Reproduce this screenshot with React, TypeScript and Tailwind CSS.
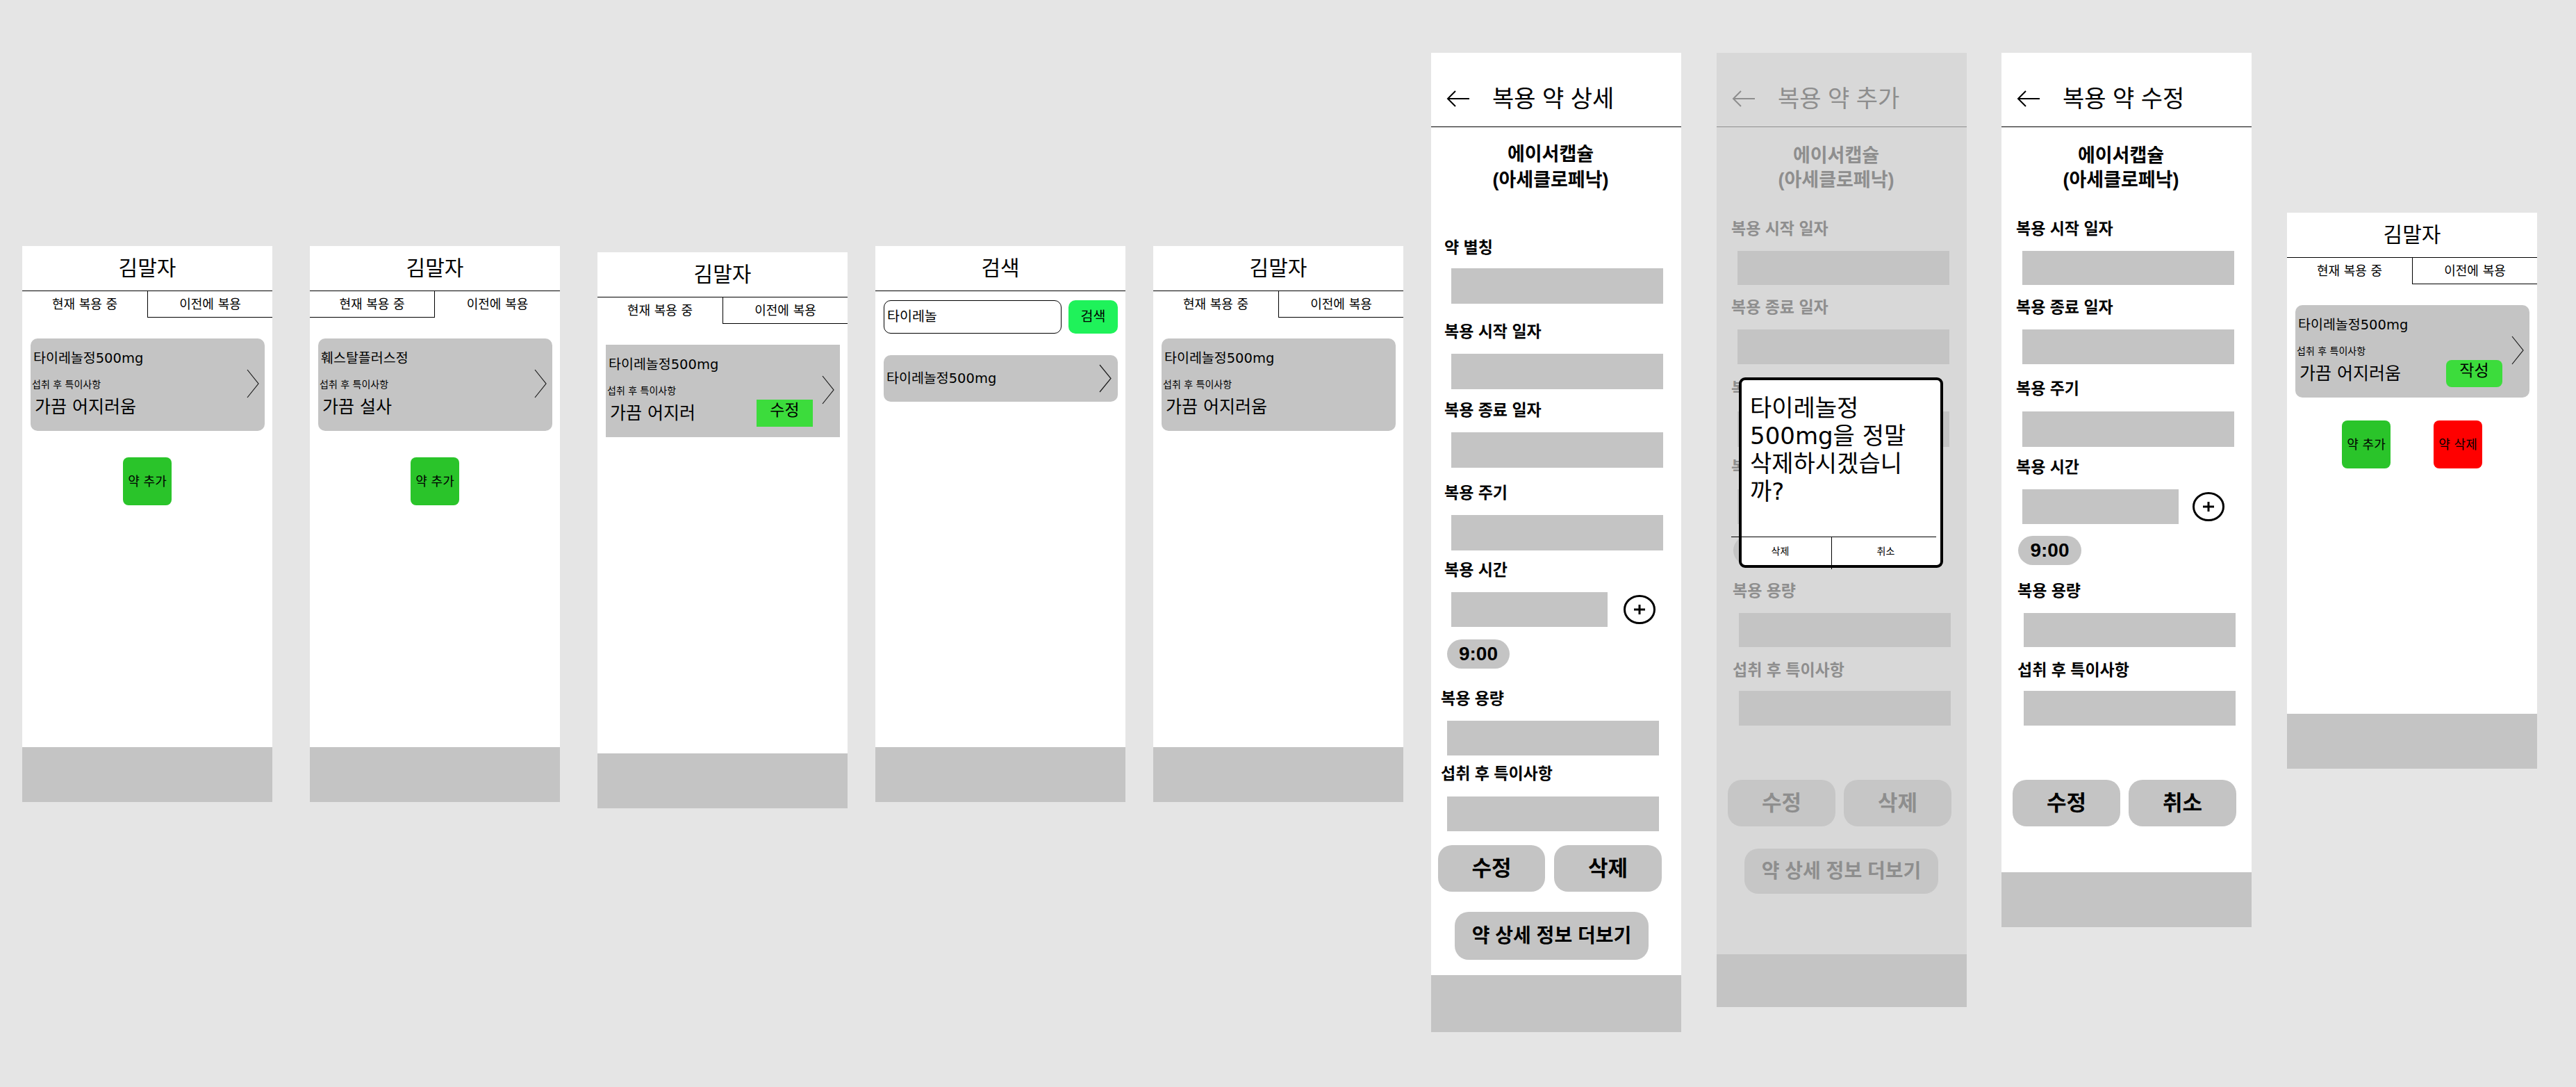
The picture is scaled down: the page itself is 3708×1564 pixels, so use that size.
import React from "react";

const SANS = "font-['DejaVu_Sans','Noto_Sans_CJK_KR',sans-serif]";
const FORM = "font-['Liberation_Sans','Noto_Sans_CJK_KR',sans-serif]";

function Chevron({ h = 42 }: { h?: number }) {
  return (
    <svg width="18" height={h} viewBox={`0 0 18 ${h}`} className="block">
      <polyline points={`1,1 17,${h / 2} 1,${h - 1}`} fill="none" stroke="#1a1a1a" strokeWidth="1.2" />
    </svg>
  );
}

function Arrow() {
  return (
    <svg width="34" height="26" viewBox="0 0 34 26" className="block shrink-0">
      <path d="M33 13H2M13 2 2 13l11 11" fill="none" stroke="currentColor" strokeWidth="2" />
    </svg>
  );
}

function PlusCircle({ color = "#000" }: { color?: string }) {
  return (
    <svg width="46" height="42" viewBox="0 0 46 42" className="block shrink-0">
      <ellipse cx="23" cy="21" rx="21.5" ry="19.5" fill="none" stroke={color} strokeWidth="3" />
      <path d="M15 21h16M23 14v14" stroke={color} strokeWidth="3" />
    </svg>
  );
}

function Screen({ className = "", children }: { className?: string; children: React.ReactNode }) {
  return (
    <div className={`w-[360px] h-[800px] shrink-0 bg-white flex flex-col ${SANS} ${className}`}>
      <div className="flex-1 flex flex-col">{children}</div>
      <div className="h-[79px] bg-[#c4c4c4]" />
    </div>
  );
}

function TitleBar({ title }: { title: string }) {
  return (
    <div className="h-[65px] shrink-0 border-b border-black flex items-center justify-center text-[30px] leading-none">
      {title}
    </div>
  );
}

function Tabs({ selected }: { selected: 0 | 1 }) {
  return (
    <div className="grid grid-cols-2 h-[38px] text-[18px] leading-none">
      <div
        className={
          selected === 0
            ? "flex items-center justify-center"
            : "flex items-center justify-center border-r border-b border-black"
        }
      >
        현재 복용 중
      </div>
      <div
        className={
          selected === 1
            ? "flex items-center justify-center"
            : "flex items-center justify-center border-l border-b border-black"
        }
      >
        이전에 복용
      </div>
    </div>
  );
}

function MedCard({
  name,
  value,
  rounded = true,
  chevron = true,
  action,
}: {
  name: string;
  value: string;
  rounded?: boolean;
  chevron?: boolean;
  action?: { label: string; cls: string };
}) {
  return (
    <div className={`ml-[12px] mt-[30px] w-[337px] h-[133px] bg-[#c4c4c4] flex ${rounded ? "rounded-[10px]" : ""}`}>
      <div className="flex-1 min-w-0 flex flex-col pt-[15px]">
        <div className="text-[19.5px] leading-[28px] pl-[4px] whitespace-nowrap">{name}</div>
        <div className="mt-[14px] text-[14px] leading-[18px] pl-[2px] whitespace-nowrap">섭취 후 특이사항</div>
        <div className="mt-[9px] text-[25px] leading-[30px] pl-[6px] whitespace-nowrap">{value}</div>
      </div>
      {action && (
        <div
          className={`mt-[79px] w-[81px] h-[39px] shrink-0 flex justify-center pt-[1px] text-[23px] leading-[28px] ${action.cls}`}
        >
          {action.label}
        </div>
      )}
      {chevron && (
        <div className="mt-[44px] ml-[13px] mr-[8px] shrink-0">
          <Chevron />
        </div>
      )}
    </div>
  );
}

function AddBtn() {
  return (
    <div className="w-[70px] h-[69px] rounded-[8px] bg-[#2ac42a] flex items-center justify-center text-[18px] whitespace-nowrap">
      약 추가
    </div>
  );
}

function FormHeader({ title, dim }: { title: string; dim?: boolean }) {
  return (
    <div
      className={`h-[107px] shrink-0 border-b flex items-end pb-[20px] pl-[22px] ${dim ? "border-[#8f8f8f]" : "border-black"}`}
    >
      <div className="h-[40px] flex items-center gap-[32px]">
        <Arrow />
        <span className="text-[34px] leading-[40px] whitespace-nowrap">{title}</span>
      </div>
    </div>
  );
}

const LABEL = "text-[23px] leading-[30px] font-bold whitespace-nowrap";
const BIGBTN = "h-[67px] rounded-[20px] flex items-center justify-center text-[31px] font-bold leading-none";

function DetailScreen() {
  return (
    <div className={`w-[360px] h-[1409px] shrink-0 bg-white flex flex-col ml-[40px] mt-[76px] ${FORM}`}>
      <FormHeader title="복용 약 상세" />
      <div className="mt-[21px] pr-[16px] text-center text-[27px] leading-[37px] font-bold">
        에이서캡슐
        <br />
        (아세클로페낙)
      </div>
      <div className={`mt-[63px] pl-[19px] ${LABEL}`}>약 별칭</div>
      <div className="mt-[15px] ml-[29px] w-[305px] h-[51px] bg-[#c4c4c4]" />
      <div className={`mt-[25px] pl-[19px] ${LABEL}`}>복용 시작 일자</div>
      <div className="mt-[17px] ml-[29px] w-[305px] h-[51px] bg-[#c4c4c4]" />
      <div className={`mt-[15px] pl-[19px] ${LABEL}`}>복용 종료 일자</div>
      <div className="mt-[17px] ml-[29px] w-[305px] h-[51px] bg-[#c4c4c4]" />
      <div className={`mt-[21px] pl-[19px] ${LABEL}`}>복용 주기</div>
      <div className="mt-[17px] ml-[29px] w-[305px] h-[51px] bg-[#c4c4c4]" />
      <div className={`mt-[13px] pl-[19px] ${LABEL}`}>복용 시간</div>
      <div className="mt-[17px] flex items-center">
        <div className="ml-[29px] w-[225px] h-[50px] bg-[#c4c4c4]" />
        <div className="ml-[23px]">
          <PlusCircle />
        </div>
      </div>
      <div className="mt-[18px] ml-[23px] w-[90px] h-[42px] rounded-full bg-[#c4c4c4] flex items-center justify-center text-[28px] font-bold leading-none">
        9:00
      </div>
      <div className={`mt-[28px] pl-[14px] ${LABEL}`}>복용 용량</div>
      <div className="mt-[17px] ml-[23px] w-[305px] h-[50px] bg-[#c4c4c4]" />
      <div className={`mt-[11px] pl-[14px] ${LABEL}`}>섭취 후 특이사항</div>
      <div className="mt-[18px] ml-[23px] w-[305px] h-[50px] bg-[#c4c4c4]" />
      <div className="mt-[20px] pl-[10px] flex gap-[13px]">
        <div className={`w-[154px] bg-[#c4c4c4] ${BIGBTN}`}>수정</div>
        <div className={`w-[155px] bg-[#c4c4c4] ${BIGBTN}`}>삭제</div>
      </div>
      <div className="mt-[29px] ml-[34px] w-[279px] h-[69px] rounded-[20px] bg-[#c4c4c4] flex items-center justify-center text-[28px] font-bold leading-none whitespace-nowrap">
        약 상세 정보 더보기
      </div>
      <div className="flex-1" />
      <div className="h-[82px] bg-[#c4c4c4]" />
    </div>
  );
}

function EditScreen({
  title,
  dim,
  second,
  more,
  dialog,
  className,
  footer,
}: {
  title: string;
  dim?: boolean;
  second: string;
  more?: boolean;
  dialog?: boolean;
  className: string;
  footer: string;
}) {
  const bar = "bg-[#c4c4c4]";
  const btn = dim ? "bg-[#c6c6c6]" : "bg-[#c4c4c4]";
  return (
    <div
      className={`relative w-[360px] shrink-0 flex flex-col ${FORM} ${dim ? "bg-[#d8d8d8] text-[#8e8e8e]" : "bg-white text-black"} ${className}`}
    >
      <FormHeader title={title} dim={dim} />
      <div className="mt-[24px] pr-[16px] text-center text-[27px] leading-[35px] font-bold">
        에이서캡슐
        <br />
        (아세클로페낙)
      </div>
      <div className={`mt-[37px] pl-[21px] ${LABEL}`}>복용 시작 일자</div>
      <div className={`mt-[17px] ml-[30px] w-[305px] h-[49px] ${bar}`} />
      <div className={`mt-[17px] pl-[21px] ${LABEL}`}>복용 종료 일자</div>
      <div className={`mt-[17px] ml-[30px] w-[305px] h-[50px] ${bar}`} />
      <div className={`mt-[20px] pl-[21px] ${LABEL}`}>복용 주기</div>
      <div className={`mt-[18px] ml-[30px] w-[305px] h-[51px] ${bar}`} />
      <div className={`mt-[14px] pl-[21px] ${LABEL}`}>복용 시간</div>
      <div className="mt-[17px] flex items-center">
        <div className={`ml-[30px] w-[225px] h-[50px] ${bar}`} />
        <div className="ml-[20px]">
          <PlusCircle color={dim ? "#8e8e8e" : "#000"} />
        </div>
      </div>
      <div className="mt-[17px] ml-[24px] w-[91px] h-[42px] rounded-full bg-[#c4c4c4] flex items-center justify-center text-[28px] font-bold leading-none">
        9:00
      </div>
      <div className={`mt-[22px] pl-[23px] ${LABEL}`}>복용 용량</div>
      <div className={`mt-[17px] ml-[32px] w-[305px] h-[49px] ${bar}`} />
      <div className={`mt-[18px] pl-[23px] ${LABEL}`}>섭취 후 특이사항</div>
      <div className={`mt-[15px] ml-[32px] w-[305px] h-[50px] ${bar}`} />
      <div className="mt-[78px] pl-[16px] flex gap-[12px]">
        <div className={`w-[155px] ${btn} ${BIGBTN}`}>수정</div>
        <div className={`w-[155px] ${btn} ${BIGBTN}`}>{second}</div>
      </div>
      {more && (
        <div
          className={`mt-[32px] ml-[40px] w-[279px] h-[65px] rounded-[20px] ${btn} flex items-center justify-center text-[28px] font-bold leading-none whitespace-nowrap`}
        >
          약 상세 정보 더보기
        </div>
      )}
      <div className="flex-1" />
      <div className={`${footer} bg-[#c4c4c4]`} />
      {dialog && (
        <div
          className={`absolute left-[32px] top-[467px] w-[294px] h-[274px] border-[4px] border-black rounded-[9px] bg-white flex flex-col text-black ${SANS}`}
        >
          <div className="h-[225px] pl-[12px] pt-[20px] text-[34px] leading-[40px] whitespace-nowrap">
            타이레놀정
            <br />
            500mg을 정말
            <br />
            삭제하시겠습니
            <br />
            까?
          </div>
          <div className="absolute left-[-15px] top-[225px] w-[295px] h-px bg-black" />
          <div className="flex-1 flex text-[14px] leading-none pt-px">
            <div className="w-[129px] flex items-center justify-center pr-[18px]">삭제</div>
            <div className="flex-1 flex items-center justify-center">취소</div>
          </div>
          <div className="absolute left-[129px] top-[225px] w-px h-[47px] bg-black" />
        </div>
      )}
    </div>
  );
}

export default function App() {
  return (
    <div className="w-[3708px] h-[1564px] bg-[#e5e5e5] flex items-start pl-[32px] overflow-hidden text-black">
      {/* 1 */}
      <Screen className="mt-[354px]">
        <TitleBar title="김말자" />
        <Tabs selected={0} />
        <MedCard name="타이레놀정500mg" value="가끔 어지러움" />
        <div className="mt-[38px] flex justify-center">
          <AddBtn />
        </div>
      </Screen>

      {/* 2 */}
      <Screen className="ml-[54px] mt-[354px]">
        <TitleBar title="김말자" />
        <Tabs selected={1} />
        <MedCard name="훼스탈플러스정" value="가끔 설사" />
        <div className="mt-[38px] flex justify-center">
          <AddBtn />
        </div>
      </Screen>

      {/* 3 */}
      <Screen className="ml-[54px] mt-[363px]">
        <TitleBar title="김말자" />
        <Tabs selected={0} />
        <MedCard
          name="타이레놀정500mg"
          value="가끔 어지러"
          rounded={false}
          action={{ label: "수정", cls: "bg-[#3cdc3c]" }}
        />
      </Screen>

      {/* 4 */}
      <Screen className="ml-[40px] mt-[354px]">
        <TitleBar title="검색" />
        <div className="mt-[13px] ml-[12px] flex gap-[10px]">
          <div className="w-[256px] h-[48px] rounded-[10px] border-[1.5px] border-black flex items-center pl-[4px] text-[19.5px]">
            타이레놀
          </div>
          <div className="w-[71px] h-[48px] rounded-[10px] bg-[#1ff25a] flex items-center justify-center text-[19.5px]">
            검색
          </div>
        </div>
        <div className="mt-[31px] ml-[12px] w-[337px] h-[67px] rounded-[10px] bg-[#c4c4c4] flex items-start">
          <div className="flex-1 pl-[4px] mt-[20px] text-[19.5px] leading-[28px] whitespace-nowrap">타이레놀정500mg</div>
          <div className="mt-[13px] mr-[9px]">
            <Chevron h={41} />
          </div>
        </div>
      </Screen>

      {/* 5 */}
      <Screen className="ml-[40px] mt-[354px]">
        <TitleBar title="김말자" />
        <Tabs selected={0} />
        <MedCard name="타이레놀정500mg" value="가끔 어지러움" chevron={false} />
      </Screen>

      {/* 6 */}
      <DetailScreen />

      {/* 7 */}
      <EditScreen
        title="복용 약 추가"
        dim
        second="삭제"
        more
        dialog
        className="ml-[51px] mt-[76px] h-[1373px]"
        footer="h-[76px]"
      />

      {/* 8 */}
      <EditScreen title="복용 약 수정" second="취소" className="ml-[50px] mt-[76px] h-[1258px]" footer="h-[79px]" />

      {/* 9 */}
      <Screen className="ml-[51px] mt-[306px]">
        <TitleBar title="김말자" />
        <Tabs selected={0} />
        <MedCard
          name="타이레놀정500mg"
          value="가끔 어지러움"
          action={{ label: "작성", cls: "bg-[#3cdc3c] rounded-[8px]" }}
        />
        <div className="mt-[33px] pl-[79px] flex gap-[62px]">
          <AddBtn />
          <div className="w-[70px] h-[69px] rounded-[8px] bg-[#ff0000] flex items-center justify-center text-[18px] whitespace-nowrap">
            약 삭제
          </div>
        </div>
      </Screen>
    </div>
  );
}
